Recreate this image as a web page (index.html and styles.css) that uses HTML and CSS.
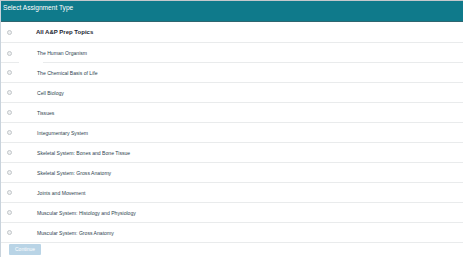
FILE: index.html
```html
<!DOCTYPE html>
<html lang="en">
<head>
  <meta charset="UTF-8" />
  <title>Select Assignment Type</title>
  <link rel="stylesheet" href="styles.css">
</head>
<body>
  <div class="panel">
    <div class="header">Select Assignment Type</div>
    <ul class="topics">
      <li class="topic all"><span class="radio"></span><span class="label">All A&amp;P Prep Topics</span></li>
      <li class="topic gap"><span class="radio"></span><span class="label">The Human Organism</span></li>
      <li class="topic"><span class="radio"></span><span class="label">The Chemical Basis of Life</span></li>
      <li class="topic"><span class="radio"></span><span class="label">Cell Biology</span></li>
      <li class="topic"><span class="radio"></span><span class="label">Tissues</span></li>
      <li class="topic"><span class="radio"></span><span class="label">Integumentary System</span></li>
      <li class="topic"><span class="radio"></span><span class="label">Skeletal System: Bones and Bone Tissue</span></li>
      <li class="topic"><span class="radio"></span><span class="label">Skeletal System: Gross Anatomy</span></li>
      <li class="topic"><span class="radio"></span><span class="label">Joints and Movement</span></li>
      <li class="topic"><span class="radio"></span><span class="label">Muscular System: Histology and Physiology</span></li>
      <li class="topic"><span class="radio"></span><span class="label">Muscular System: Gross Anatomy</span></li>
    </ul>
    <div class="actions">
      <button type="button" class="continue">Continue</button>
    </div>
  </div>
</body>
</html>
```

FILE: styles.css
```css
body {
  margin: 0;
  font-family: "Liberation Sans", Arial, sans-serif;
  background: #fff;
}
.panel {
  border-left: 1px solid #c9d3dc;
  border-top: 1px solid #c4c8cc;
  height: 256px;
  overflow: hidden;
}
.header {
  background: #0f7a8b;
  color: #fff;
  font-size: 6.6px;
  height: 20px;
  line-height: 14px;
  padding-left: 2px;
  border-bottom: 1px solid #2f6670;
}
.topics {
  list-style: none;
  margin: 0;
  padding: 0;
}
.topic {
  display: flex;
  align-items: center;
  height: 19px;
  border-bottom: 1px solid #e9ebec;
  color: #2e3f4f;
  font-size: 5.1px;
}
.topic.all {
  height: 20px;
}
.topic.gap {
  border-bottom: none;
  height: 20px;
  background: linear-gradient(to right, #e9ebec 18px, #fff 18px, #fff 42px, #e9ebec 42px) bottom / 100% 1px no-repeat;
}
.radio {
  width: 3px;
  height: 3px;
  border: 1px solid #c2c6c9;
  border-radius: 50%;
  background: #eef0f1;
  margin-left: 6px;
  margin-right: 25px;
}
.all .label {
  font-weight: bold;
  font-size: 6px;
  color: #1b2530;
  margin-left: -1px;
}
.actions {
  display: flex;
  padding: 1px 0 0 8px;
}
.continue {
  font-family: inherit;
  font-size: 5px;
  line-height: 11px;
  color: #fff;
  background: #b9d4e6;
  border: none;
  border-radius: 1px;
  width: 32px;
  height: 11px;
  padding: 0;
}
```
